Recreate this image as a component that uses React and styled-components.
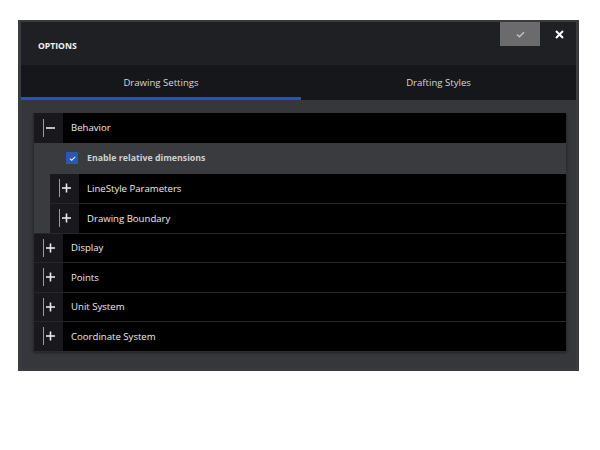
import React from 'react';
import styled, { createGlobalStyle } from 'styled-components';

const GlobalStyle = createGlobalStyle`
  body {
    margin: 0;
    background: #ffffff;
    font-family: "Open Sans", "Liberation Sans", sans-serif;
  }
`;

const Dialog = styled.div`
  margin: 20px 0 0 18px;
  width: 561px;
  height: 351px;
  box-sizing: border-box;
  background: #36373b;
  border: 3px solid #3a3b3f;
  border-top-width: 2px;
  display: flex;
  flex-direction: column;
  position: relative;
`;

const Header = styled.div`
  height: 43px;
  background: #1f2024;
  display: flex;
  align-items: center;
  padding: 5px 0 0 17px;
  box-sizing: border-box;
`;

const Title = styled.span`
  color: #f2f2f2;
  font-size: 8.6px;
  font-weight: 700;
`;

const Actions = styled.div`
  position: absolute;
  top: 0;
  right: -3px;
  display: flex;
`;

const ActionButton = styled.button`
  all: unset;
  width: ${(p) => (p.$primary ? '40px' : '39px')};
  height: 24px;
  background: ${(p) => (p.$primary ? '#6b6b6d' : 'transparent')};
  display: flex;
  align-items: center;
  justify-content: center;
`;

const Tabs = styled.div`
  height: 35px;
  background: #16171b;
  display: flex;
`;

const Tab = styled.div`
  flex: ${(p) => (p.$active ? '0 0 280px' : '1')};
  display: flex;
  align-items: center;
  justify-content: center;
  color: #d6d6d6;
  font-size: 9.6px;
  box-sizing: border-box;
  border-bottom: 3px solid ${(p) => (p.$active ? '#1d55c6' : 'transparent')};
  padding-top: 2px;
`;

const Body = styled.div`
  flex: 1;
  padding: 13px 9px 0 12px;
`;

const Tree = styled.div`
  border: 1px solid #2b2c30;
  border-top: none;
  background: #000;
  box-shadow: 0 1px 2px rgba(0, 0, 0, 0.35);
`;

const Row = styled.div`
  height: 29.5px;
  box-sizing: border-box;
  display: flex;
  align-items: stretch;
  background: #000;
  border-top: ${(p) => (p.$first ? 'none' : '1px solid #26272a')};
`;

const Toggle = styled.div`
  width: 29px;
  background: #19191d;
  display: flex;
  align-items: center;
  justify-content: center;
`;

const Label = styled.div`
  display: flex;
  align-items: center;
  padding-left: 8px;
  color: #ececec;
  font-size: 9.6px;
`;

const GroupBody = styled.div`
  background: #3a3b3f;
  padding-left: 16px;
`;

const OptionRow = styled.div`
  height: 31px;
  display: flex;
  align-items: center;
  padding-left: 16px;
  margin-left: -16px;
  gap: 9px;
`;

const Checkbox = styled.div`
  width: 12px;
  height: 12px;
  margin-left: 16px;
  background: #2b57b2;
  display: flex;
  align-items: center;
  justify-content: center;
`;

const OptionText = styled.span`
  color: #cfcfcf;
  font-size: 8.8px;
  font-weight: 700;
`;

const ToggleIcon = ({ open }) => (
  <svg width="14" height="18" viewBox="0 0 14 18">
    <line x1="1.5" y1="0" x2="1.5" y2="18" stroke="#9a9a9a" strokeWidth="1" />
    <line x1="4" y1="9" x2="13" y2="9" stroke="#e8e8e8" strokeWidth="1.6" />
    {!open && <line x1="8.5" y1="4.5" x2="8.5" y2="13.5" stroke="#e8e8e8" strokeWidth="1.6" />}
  </svg>
);

const TreeRow = ({ label, open, first }) => (
  <Row $first={first}>
    <Toggle>
      <ToggleIcon open={open} />
    </Toggle>
    <Label>{label}</Label>
  </Row>
);

const topItems = ['Display', 'Points', 'Unit System', 'Coordinate System'];

const App = () => (
  <>
    <GlobalStyle />
    <Dialog>
      <Header>
        <Title>OPTIONS</Title>
      </Header>
      <Actions>
        <ActionButton $primary>
          <svg width="9" height="7" viewBox="0 0 9 7">
            <path d="M1 3.6 L3.4 5.8 L8 1.2" fill="none" stroke="#c4c4c4" strokeWidth="1.4" />
          </svg>
        </ActionButton>
        <ActionButton>
          <svg width="9" height="9" viewBox="0 0 9 9">
            <path d="M1 1 L8 8 M8 1 L1 8" stroke="#ffffff" strokeWidth="2" />
          </svg>
        </ActionButton>
      </Actions>
      <Tabs>
        <Tab $active>Drawing Settings</Tab>
        <Tab>Drafting Styles</Tab>
      </Tabs>
      <Body>
        <Tree>
          <TreeRow label="Behavior" open first />
          <GroupBody>
            <OptionRow>
              <Checkbox>
                <svg width="7" height="5" viewBox="0 0 7 5">
                  <path d="M0.8 2.6 L2.7 4.2 L6.2 0.8" fill="none" stroke="#e6ecff" strokeWidth="1.1" />
                </svg>
              </Checkbox>
              <OptionText>Enable relative dimensions</OptionText>
            </OptionRow>
            <TreeRow label="LineStyle Parameters" first />
            <TreeRow label="Drawing Boundary" />
          </GroupBody>
          {topItems.map((item) => (
            <TreeRow key={item} label={item} />
          ))}
        </Tree>
      </Body>
    </Dialog>
  </>
);

export default App;
